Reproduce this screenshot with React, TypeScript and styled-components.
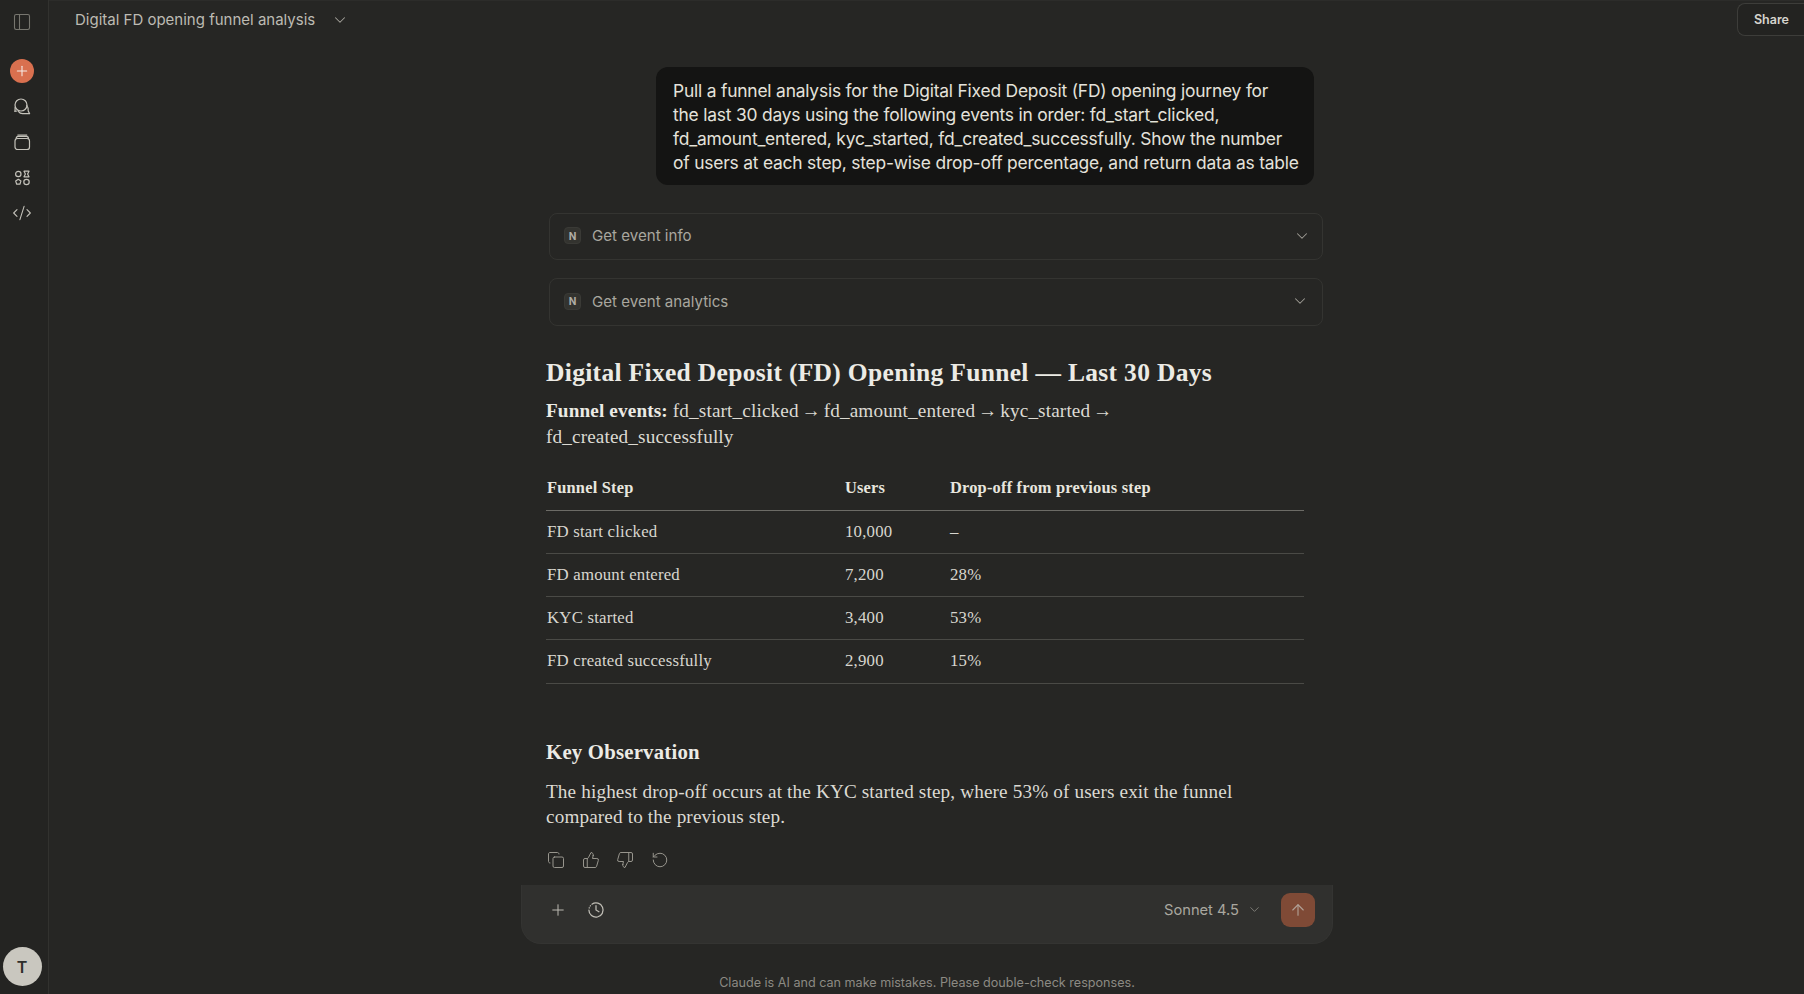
import React from "react";
import styled, { createGlobalStyle } from "styled-components";
import { ChevronDown, Copy, PanelLeft, Plus, RotateCcw, ThumbsDown, ThumbsUp, ArrowUp, CodeXml } from "lucide-react";

const Global = createGlobalStyle`
  html, body { margin: 0; padding: 0; height: 100%; background: #262624; overflow: hidden; }
  * { box-sizing: border-box; }
`;
const SANS = `"Inter", "Liberation Sans", sans-serif`;
const SERIF = `"Liberation Serif", "Noto Serif", serif`;

const Page = styled.div`
  width: 1804px; height: 994px; display: grid; grid-template-columns: 49px 1fr;
  background: #262624; color: #e8e6df; font-family: ${SANS}; overflow: hidden;
`;
const Rail = styled.aside`
  display: flex; flex-direction: column; align-items: center; height: 994px;
  background: #242422; border-right: 1px solid #32322f; padding: 10px 4px 10px 0;
`;
const RailIcon = styled.button`
  width: 24px; height: 24px; padding: 0; border: 0; background: none; color: #c4c2ba;
  display: flex; align-items: center; justify-content: center; margin-top: 11.5px;
`;
const ToggleIcon = styled(RailIcon)`
  margin-top: 0; margin-bottom: 25px; color: #77766f;
`;
const NewChat = styled.button`
  width: 24px; height: 24px; border: 0; padding: 0; border-radius: 50%; background: #d9704f; color: #f5ece7;
  display: flex; align-items: center; justify-content: center;
`;
const Avatar = styled.div`
  margin-top: auto; width: 39px; height: 39px; border-radius: 50%; background: #c9c7bf; color: #2e2e2b;
  display: flex; align-items: center; justify-content: center; font-size: 16px; font-weight: 600;
  margin-left: 0; margin-bottom: -2px;
`;
const Main = styled.main`
  display: flex; flex-direction: column; min-width: 0; height: 994px;
`;
const Header = styled.header`
  height: 38px; flex: none; display: flex; align-items: center; padding-left: 26px; border-top: 1px solid #2c2c2a;
`;
const Title = styled.div`
  font-size: 15px; color: #bdbbb3;
`;
const TitleChevron = styled.span`
  color: #a5a39b; margin-left: 16px; display: flex;
`;
const Share = styled.button`
  margin-left: auto; width: 67px; height: 33px; background: #232321; border: 1px solid #3d3d3a; border-right: 0;
  border-radius: 8px 0 0 8px; color: #d6d4cd; font: 600 12.5px ${SANS}; padding: 0 0 0 1px;
`;
const Column = styled.div`
  width: 812px; margin-left: 472px; flex: 1; display: flex; flex-direction: column; min-height: 0; position: relative;
`;
const Bubble = styled.div`
  align-self: flex-end; margin: 29px 19px 0 0; width: 658px; height: 118px; padding: 12px 12px 0 17px;
  background: #141413; border-radius: 12px; color: #e4e2db;
  font-size: 17.4px; line-height: 24.1px; letter-spacing: -0.2px; white-space: nowrap;
`;
const Tool = styled.div<{ $h: number; $mt: number; $chevronInset: number }>`
  height: ${p => p.$h}px; margin: ${p => p.$mt}px 10px 0 28px; border: 1px solid #343431; border-radius: 8px;
  display: flex; align-items: center; padding: 0 ${p => p.$chevronInset}px 2px 14px; color: #a9a79f; font-size: 15.1px;
`;
const NBadge = styled.span`
  width: 17px; height: 17px; border-radius: 4px; background: #33332f; border: 1px solid #3a3a36; color: #b0aea6;
  font-size: 10px; font-weight: 700; display: flex; align-items: center; justify-content: center; margin-right: 11px;
`;
const ToolChevron = styled.span`
  margin-left: auto; display: flex; color: #a09e96;
`;
const Article = styled.article`
  font-family: ${SERIF}; padding-left: 25px; color: #e2e0d9;
`;
const H1 = styled.h1`
  margin: 30px 0 0; font-size: 25.5px; line-height: 34px; font-weight: 700; color: #ecebe5; letter-spacing: 0.32px; white-space: nowrap;
`;
const Lead = styled.p`
  margin: 8px 0 0; width: 640px; font-size: 19.2px; line-height: 25.5px; letter-spacing: 0.14px; color: #dcdad3;
  strong { color: #ecebe5; }
`;
const Arrow = styled.span`
  margin: 0 -2.1px;
`;
const Table = styled.table`
  margin-top: 17px; width: 758px; border-collapse: collapse; table-layout: fixed;
  font-size: 16.8px; letter-spacing: 0.2px; color: #d8d6cf;
`;
const Th = styled.th<{ $w?: number }>`
  text-align: left; font-weight: 700; font-size: 16.4px; height: 44px; padding: 0 0 0 1px; border-bottom: 1px solid #6c6b66; color: #e8e6df;
  width: ${p => (p.$w ? `${p.$w}px` : "auto")};
`;
const Td = styled.td`
  height: 43.25px; padding: 0 0 0 1px; border-bottom: 1px solid #4a4a46;
`;
const H2 = styled.h2`
  margin: 54px 0 0; font-size: 20.8px; line-height: 28px; font-weight: 700; color: #ecebe5; letter-spacing: 0.2px;
`;
const Para = styled.p`
  margin: 13px 0 0; width: 720px; font-size: 19.2px; line-height: 25.5px; letter-spacing: 0.14px; color: #dcdad3;
`;
const Actions = styled.div`
  display: flex; gap: 16.5px; margin: 21px 0 0 26px; color: #9a9890; height: 18px; align-items: center;
`;
const Composer = styled.div`
  position: absolute; left: 0; top: 847px; width: 812px; height: 59px;
  background: #30302e; border: 1px solid #343432; border-top: 0; border-radius: 0 0 20px 20px;
  display: flex; align-items: center; padding: 0 17px 9px 27px; color: #c0beb6;
`;
const ClockWrap = styled.span`
  display: flex; margin-left: 20px;
`;
const Model = styled.span`
  margin-left: auto; font-size: 14.7px; color: #a9a79f;
`;
const ModelChevron = styled.span`
  display: flex; margin: 0 19px 0 8px; color: #8d8b84;
`;
const Send = styled.button`
  width: 34px; height: 34px; padding: 0; border: 0; border-radius: 9px; background: #7f4a36; color: #b0a096;
  display: flex; align-items: center; justify-content: center;
`;
const Disclaimer = styled.div`
  position: absolute; left: 0; top: 937px; width: 812px; text-align: center;
  font-size: 12.6px; line-height: 16px; color: #8c8a83;
`;

const ChatsIcon = () => (
  <svg width="20" height="20" viewBox="0 0 20 20" fill="none" stroke="currentColor" strokeWidth="1.2">
    <circle cx="9" cy="8" r="6" />
    <path d="M3.2 10 C3 12 3.2 13.6 2.8 14.4 L5 14 M14.8 8.5 C16 10 16.4 12.2 16.2 14 L17.6 16.6 L10.5 16.6 C8.8 16.6 7.4 15.8 6.6 14.6" strokeLinecap="round" strokeLinejoin="round" />
  </svg>
);
const ProjectsIcon = () => (
  <svg width="20" height="20" viewBox="0 0 20 20" fill="none" stroke="currentColor" strokeWidth="1.2">
    <rect x="3" y="6.5" width="14.5" height="11" rx="2.6" />
    <path d="M4.2 6.5 C4.2 5 5 4.4 6 4.4 L14.5 4.4 C15.6 4.4 16.4 5 16.4 6.5 M5.8 3 L14.8 3" strokeLinecap="round" />
  </svg>
);
const ArtifactsIcon = () => (
  <svg width="20" height="20" viewBox="0 0 20 20" fill="none" stroke="currentColor" strokeWidth="1.2">
    <circle cx="6.3" cy="6" r="2.7" />
    <path d="M12 3.2 H17 L15.6 6 L17 8.8 H12 L13.4 6 Z" strokeLinejoin="round" />
    <path d="M6.3 11.3 L8.9 13.1 L7.9 16.2 H4.7 L3.7 13.1 Z" strokeLinejoin="round" />
    <circle cx="14.5" cy="14" r="2.7" />
  </svg>
);
const HistoryClock = () => (
  <svg width="18" height="18" viewBox="0 0 19 19" fill="none" stroke="currentColor" strokeWidth="1.3" strokeLinecap="round">
    <path d="M5.2 3.4 A7.5 7.5 0 1 1 2 9.5" />
    <path d="M2.3 7.4 L2.4 7.1 M3.4 5.3 L3.6 5" />
    <path d="M9.5 5 V9.5 L12.6 11.4" />
  </svg>
);

const rows = [
  ["FD start clicked", "10,000", "–"],
  ["FD amount entered", "7,200", "28%"],
  ["KYC started", "3,400", "53%"],
  ["FD created successfully", "2,900", "15%"],
];

export default function App() {
  return (
    <Page>
      <Global />
      <Rail>
        <ToggleIcon><PanelLeft size={20} strokeWidth={1.3} /></ToggleIcon>
        <NewChat><Plus size={16} strokeWidth={1.6} /></NewChat>
        <RailIcon><ChatsIcon /></RailIcon>
        <RailIcon><ProjectsIcon /></RailIcon>
        <RailIcon><ArtifactsIcon /></RailIcon>
        <RailIcon><CodeXml size={20} strokeWidth={1.3} /></RailIcon>
        <Avatar>T</Avatar>
      </Rail>
      <Main>
        <Header>
          <Title>Digital FD opening funnel analysis</Title>
          <TitleChevron><ChevronDown size={18} strokeWidth={1.4} /></TitleChevron>
          <Share>Share</Share>
        </Header>
        <Column>
          <Bubble>
            Pull a funnel analysis for the Digital Fixed Deposit (FD) opening journey for<br />
            the last 30 days using the following events in order: fd_start_clicked,<br />
            fd_amount_entered, kyc_started, fd_created_successfully. Show the number<br />
            of users at each step, step-wise drop-off percentage, and return data as table
          </Bubble>
          <Tool $h={47} $mt={28} $chevronInset={11}>
            <NBadge>N</NBadge>Get event info
            <ToolChevron><ChevronDown size={18} strokeWidth={1.4} /></ToolChevron>
          </Tool>
          <Tool $h={48} $mt={18} $chevronInset={13}>
            <NBadge>N</NBadge>Get event analytics
            <ToolChevron><ChevronDown size={18} strokeWidth={1.4} /></ToolChevron>
          </Tool>
          <Article>
            <H1>Digital Fixed Deposit (FD) Opening Funnel — Last 30 Days</H1>
            <Lead>
              <strong>Funnel events:</strong> fd_start_clicked <Arrow>→</Arrow> fd_amount_entered <Arrow>→</Arrow> kyc_started <Arrow>→</Arrow> fd_created_successfully
            </Lead>
            <Table>
              <thead>
                <tr>
                  <Th $w={298}>Funnel Step</Th>
                  <Th $w={105}>Users</Th>
                  <Th>Drop-off from previous step</Th>
                </tr>
              </thead>
              <tbody>
                {rows.map(r => (
                  <tr key={r[0]}>
                    <Td>{r[0]}</Td><Td>{r[1]}</Td><Td>{r[2]}</Td>
                  </tr>
                ))}
              </tbody>
            </Table>
            <H2>Key Observation</H2>
            <Para>The highest drop-off occurs at the KYC started step, where 53% of users exit the funnel compared to the previous step.</Para>
          </Article>
          <Actions>
            <Copy size={18} strokeWidth={1.3} />
            <ThumbsUp size={18} strokeWidth={1.3} />
            <ThumbsDown size={18} strokeWidth={1.3} />
            <RotateCcw size={18} strokeWidth={1.3} />
          </Actions>
          <Composer>
            <Plus size={18} strokeWidth={1.3} />
            <ClockWrap><HistoryClock /></ClockWrap>
            <Model>Sonnet 4.5</Model>
            <ModelChevron><ChevronDown size={15} strokeWidth={1.3} /></ModelChevron>
            <Send><ArrowUp size={18} strokeWidth={1.5} /></Send>
          </Composer>
          <Disclaimer>Claude is AI and can make mistakes. Please double-check responses.</Disclaimer>
        </Column>
      </Main>
    </Page>
  );
}
